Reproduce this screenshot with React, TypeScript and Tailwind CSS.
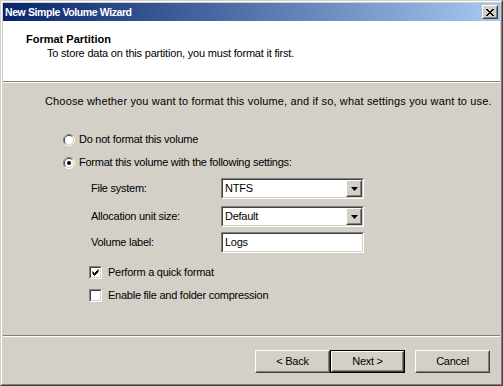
import React from 'react'

function Radio({ checked }: { checked?: boolean }) {
  return (
    <svg width="12" height="12" viewBox="0 0 12 12" className="shrink-0">
      <path d="M2.11 9.89 A5.5 5.5 0 0 1 9.89 2.11" fill="none" stroke="#808080" strokeWidth="1" />
      <path d="M9.89 2.11 A5.5 5.5 0 0 1 2.11 9.89" fill="none" stroke="#ffffff" strokeWidth="1" />
      <path d="M2.82 9.18 A4.5 4.5 0 0 1 9.18 2.82" fill="none" stroke="#404040" strokeWidth="1" />
      <path d="M9.18 2.82 A4.5 4.5 0 0 1 2.82 9.18" fill="none" stroke="#d4d0c8" strokeWidth="1" />
      <circle cx="6" cy="6" r="4" fill="#ffffff" />
      {checked && <circle cx="6" cy="6" r="2" fill="#000000" />}
    </svg>
  )
}

function Sunken({ className, children }: { className?: string; children?: React.ReactNode }) {
  return (
    <div className={`border border-t-[#808080] border-l-[#808080] border-b-white border-r-white ${className ?? ''}`}>
      <div className="h-full border border-t-[#404040] border-l-[#404040] border-b-[#d4d0c8] border-r-[#d4d0c8] bg-white flex items-center">
        {children}
      </div>
    </div>
  )
}

function Raised({ className, children }: { className?: string; children?: React.ReactNode }) {
  return (
    <div className={`border border-t-white border-l-white border-b-[#404040] border-r-[#404040] bg-[#d4d0c8] ${className ?? ''}`}>
      <div className="h-full border border-transparent border-b-[#808080] border-r-[#808080] flex items-center justify-center">
        {children}
      </div>
    </div>
  )
}

function Checkbox({ checked, label }: { checked?: boolean; label: string }) {
  return (
    <div className="flex items-center h-[13px] pl-[44px]">
      <Sunken className="w-[13px] h-[13px]">
        {checked && (
          <svg width="9" height="9" viewBox="0 0 9 9">
            <path d="M1.5 3.5 L3.5 5.5 L7.5 1.5 M1.5 4.5 L3.5 6.5 L7.5 2.5 M1.5 5.5 L3.5 7.5 L7.5 3.5" stroke="#000" strokeWidth="1" fill="none" />
          </svg>
        )}
      </Sunken>
      <span className="ml-[6px]">{label}</span>
    </div>
  )
}

function Combo({ value }: { value: string }) {
  return (
    <Sunken className="w-[143px] h-[21px]">
      <span className="flex-1 pl-[2px]">{value}</span>
      <Raised className="w-[16px] h-[17px]">
        <svg width="7" height="4" viewBox="0 0 7 4">
          <path d="M0 0 H7 L3.5 4 Z" fill="#000" />
        </svg>
      </Raised>
    </Sunken>
  )
}

function Button({ label, isDefault }: { label: string; isDefault?: boolean }) {
  if (isDefault) {
    return (
      <div className="w-[75px] h-[23px] border border-black">
        <Raised className="w-full h-full">{label}</Raised>
      </div>
    )
  }
  return <Raised className="w-[75px] h-[23px]">{label}</Raised>
}

export default function App() {
  return (
    <div className="w-[503px] h-[386px] border border-t-[#d4d0c8] border-l-[#d4d0c8] border-r-[#404040] border-b-[#404040] font-['Liberation_Sans',Arial,sans-serif] text-[11px] leading-[13px] tracking-[-0.25px] text-black">
      <div className="h-full border border-t-white border-l-white border-r-[#808080] border-b-[#808080] bg-[#d4d0c8] p-px flex flex-col">
        {/* title bar */}
        <div className="h-[18px] shrink-0 bg-linear-to-r from-[#0a246a] to-[#a6caf0] flex items-center justify-between pl-[2px] pr-[2px]">
          <span className="text-white font-bold text-[10.5px] tracking-[-0.4px]">New Simple Volume Wizard</span>
          <Raised className="w-[16px] h-[14px]">
            <svg width="8" height="7" viewBox="0 0 8 7">
              <path d="M0 0h2v1h-2zM6 0h2v1h-2zM1 1h2v1h-2zM5 1h2v1h-2zM2 2h4v1h-4zM3 3h2v1h-2zM2 4h4v1h-4zM1 5h2v1h-2zM5 5h2v1h-2zM0 6h2v1h-2zM6 6h2v1h-2z" fill="#000" />
            </svg>
          </Raised>
        </div>

        {/* header */}
        <div className="h-[60px] shrink-0 bg-white pt-[12px] pl-[23px]">
          <div className="font-bold tracking-normal">Format Partition</div>
          <div className="pl-[21px] mt-px tracking-[-0.2px]">To store data on this partition, you must format it first.</div>
        </div>
        <div className="h-px bg-[#808080] shrink-0" />
        <div className="h-px bg-white shrink-0" />

        {/* body */}
        <div className="flex-1 flex flex-col pl-[42px] pt-[12px]">
          <div className="tracking-[0.15px]">Choose whether you want to format this volume, and if so, what settings you want to use.</div>

          <div className="flex items-center h-[13px] mt-[25px] pl-[18px]">
            <Radio />
            <span className="ml-[4px]">Do not format this volume</span>
          </div>
          <div className="flex items-center h-[13px] mt-[10px] pl-[18px]">
            <Radio checked />
            <span className="ml-[4px]">Format this volume with the following settings:</span>
          </div>

          <div className="grid grid-cols-[130px_auto] items-center pl-[46px] mt-[9px] gap-y-[7px] justify-start">
            <span>File system:</span>
            <Combo value="NTFS" />
            <span>Allocation unit size:</span>
            <Combo value="Default" />
            <span className="mt-[-2px]">Volume label:</span>
            <Sunken className="w-[143px] h-[21px] mt-[-2px]">
              <span className="pl-[2px]">Logs</span>
            </Sunken>
          </div>

          <div className="mt-[13px] flex flex-col gap-[10px]">
            <Checkbox checked label="Perform a quick format" />
            <Checkbox label="Enable file and folder compression" />
          </div>
        </div>

        <div className="h-px bg-[#808080] shrink-0" />
        <div className="h-px bg-white shrink-0" />

        {/* buttons */}
        <div className="h-[46px] shrink-0 flex justify-end pt-[13px] pr-[10px]">
          <Button label="< Back" />
          <Button label="Next >" isDefault />
          <div className="ml-[10px]">
            <Button label="Cancel" />
          </div>
        </div>
      </div>
    </div>
  )
}
